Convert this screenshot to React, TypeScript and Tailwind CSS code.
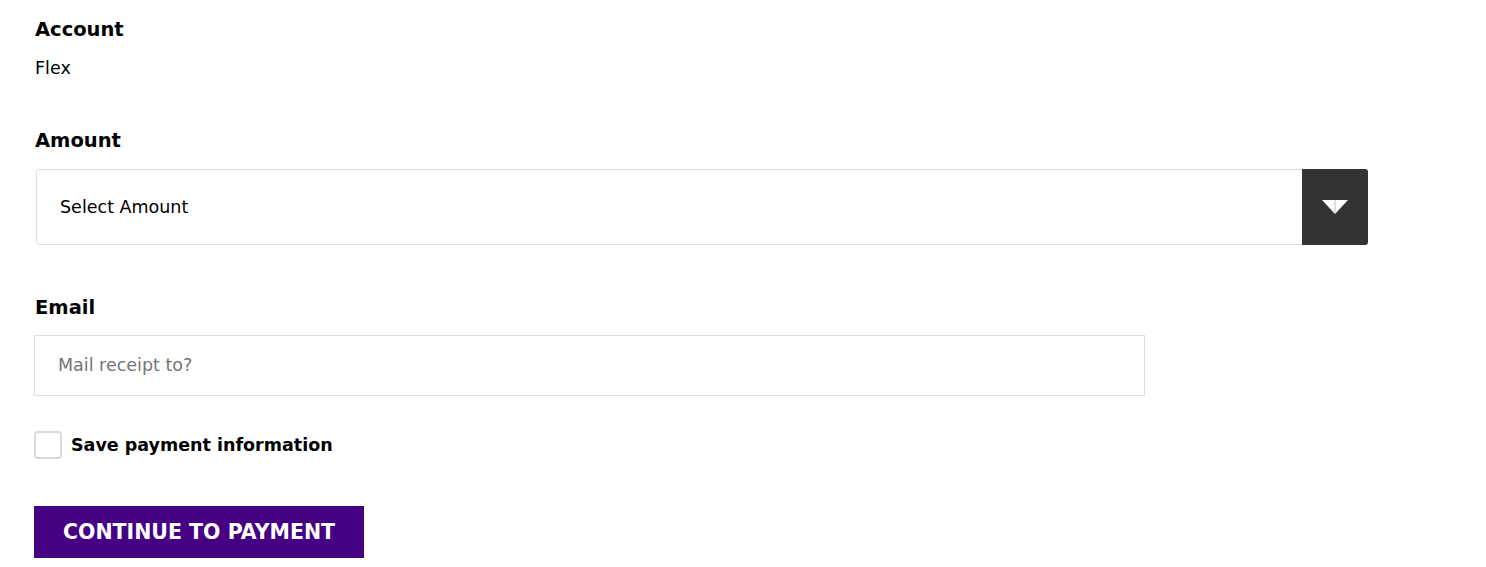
import React from "react";

export default function App() {
  return (
    <div className="min-h-screen bg-white text-black">
      <div className="px-[34px] pt-[16px] font-['DejaVu_Sans',Verdana,sans-serif]">
        <div className="text-[19.5px] font-bold leading-[28px] pl-[1px]">Account</div>
        <div className="mt-[12px] text-[17.5px] leading-[24px] pl-[1px]">Flex</div>

        <div className="mt-[47px] text-[19.5px] font-bold leading-[28px] pl-[1px]">Amount</div>
        <div className="mt-[14px] ml-[2px] flex h-[76px] w-[1332px] items-stretch rounded-[3px] border border-[#dddddd]">
          <div className="flex flex-1 items-center pl-[23px] text-[17.5px]">Select Amount</div>
          <div className="flex w-[66px] items-center justify-center rounded-r-[3px] bg-[#333333] -my-px -mr-px">
            <svg width="26" height="14" viewBox="0 0 26 14">
              <polygon points="0,0 13,0 13,14" fill="#ffffff" />
              <polygon points="13,0 26,0 13,14" fill="#ffffff" />
              <line x1="13" y1="0" x2="13" y2="13" stroke="#bbbbbb" strokeWidth="1" />
            </svg>
          </div>
        </div>

        <div className="mt-[49px] text-[19.5px] font-bold leading-[28px] pl-[1px]">Email</div>
        <div className="mt-[13px] flex h-[61px] w-[1111px] items-center border border-[#dddddd] pl-[23px] text-[17.5px] text-[#757575]">
          Mail receipt to?
        </div>

        <div className="mt-[35px] flex items-center gap-[9px]">
          <div className="h-[28px] w-[28px] rounded-[4px] border-2 border-[#d9d9d9]" />
          <div className="text-[17.5px] font-bold leading-[24px]">Save payment information</div>
        </div>

        <div className="mt-[47px] flex h-[52px] w-[330px] items-center justify-center bg-[#460084] text-[20.5px] font-bold text-white">
          CONTINUE TO PAYMENT
        </div>
      </div>
    </div>
  );
}
